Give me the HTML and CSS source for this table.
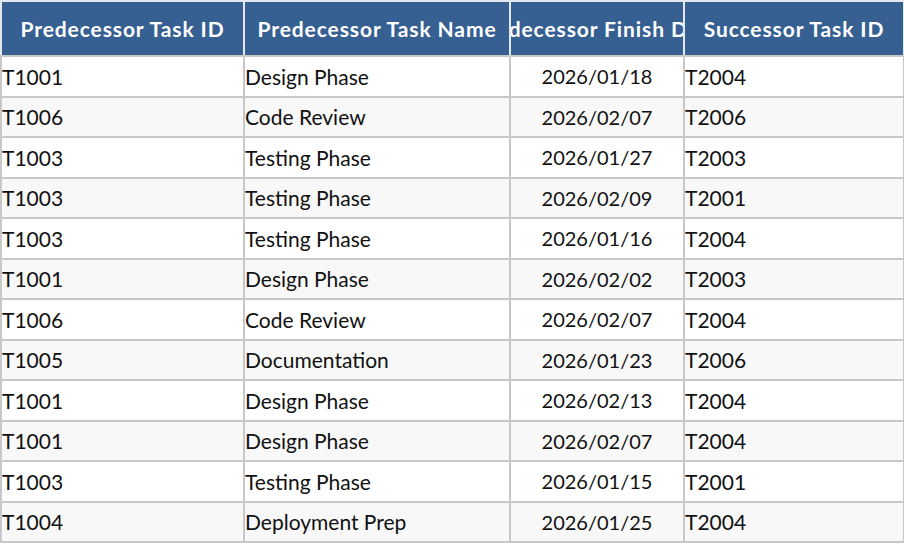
FILE: index.html
```html
<!DOCTYPE html>
<html>
<head>
<meta charset="utf-8">
<link rel="stylesheet" href="styles.css">
</head>
<body>
<table class="grid">
  <colgroup>
    <col class="c1"><col class="c2"><col class="c3"><col class="c4">
  </colgroup>
  <thead>
    <tr>
      <th><div class="clip">Predecessor Task ID</div></th>
      <th><div class="clip">Predecessor Task Name</div></th>
      <th><div class="clip">Predecessor Finish Date</div></th>
      <th><div class="clip">Successor Task ID</div></th>
    </tr>
  </thead>
  <tbody>
    <tr><td>T1001</td><td>Design Phase</td><td class="date">2026/01/18</td><td>T2004</td></tr>
    <tr><td>T1006</td><td>Code Review</td><td class="date">2026/02/07</td><td>T2006</td></tr>
    <tr><td>T1003</td><td>Testing Phase</td><td class="date">2026/01/27</td><td>T2003</td></tr>
    <tr><td>T1003</td><td>Testing Phase</td><td class="date">2026/02/09</td><td>T2001</td></tr>
    <tr><td>T1003</td><td>Testing Phase</td><td class="date">2026/01/16</td><td>T2004</td></tr>
    <tr><td>T1001</td><td>Design Phase</td><td class="date">2026/02/02</td><td>T2003</td></tr>
    <tr><td>T1006</td><td>Code Review</td><td class="date">2026/02/07</td><td>T2004</td></tr>
    <tr><td>T1005</td><td>Documentation</td><td class="date">2026/01/23</td><td>T2006</td></tr>
    <tr><td>T1001</td><td>Design Phase</td><td class="date">2026/02/13</td><td>T2004</td></tr>
    <tr><td>T1001</td><td>Design Phase</td><td class="date">2026/02/07</td><td>T2004</td></tr>
    <tr><td>T1003</td><td>Testing Phase</td><td class="date">2026/01/15</td><td>T2001</td></tr>
    <tr><td>T1004</td><td>Deployment Prep</td><td class="date">2026/01/25</td><td>T2004</td></tr>
  </tbody>
</table>
</body>
</html>
```
FILE: styles.css
```css
html, body {
  margin: 0;
  padding: 0;
  background: #ffffff;
}
body {
  font-family: Lato, "Liberation Sans", sans-serif;
  color: #111111;
}
.grid {
  border-collapse: collapse;
  table-layout: fixed;
  width: 903px;
}
.c1 { width: 243px; }
.c2 { width: 266px; }
.c3 { width: 174px; }
.c4 { width: 220px; }
.grid th {
  background: #376092;
  color: #ffffff;
  font-weight: 700;
  font-size: 21px;
  letter-spacing: 0.9px;
  height: 53px;
  padding: 0;
  border: 2px solid #e4e9f1;
  border-bottom-color: #c8c8c8;
  text-align: center;
  vertical-align: middle;
}
.clip {
  white-space: nowrap;
  overflow: hidden;
  display: flex;
  justify-content: center;
}
.grid td {
  font-size: 21px;
  height: 38.5px;
  padding: 0;
  border: 2px solid #c8c8c8;
  text-align: left;
  vertical-align: middle;
  white-space: nowrap;
  overflow: hidden;
}
.grid td.date {
  font-size: 20px;
  text-align: center;
}
.grid tbody tr:nth-child(odd) td { background: #ffffff; }
.grid tbody tr:nth-child(even) td { background: #f8f8f8; }
```
